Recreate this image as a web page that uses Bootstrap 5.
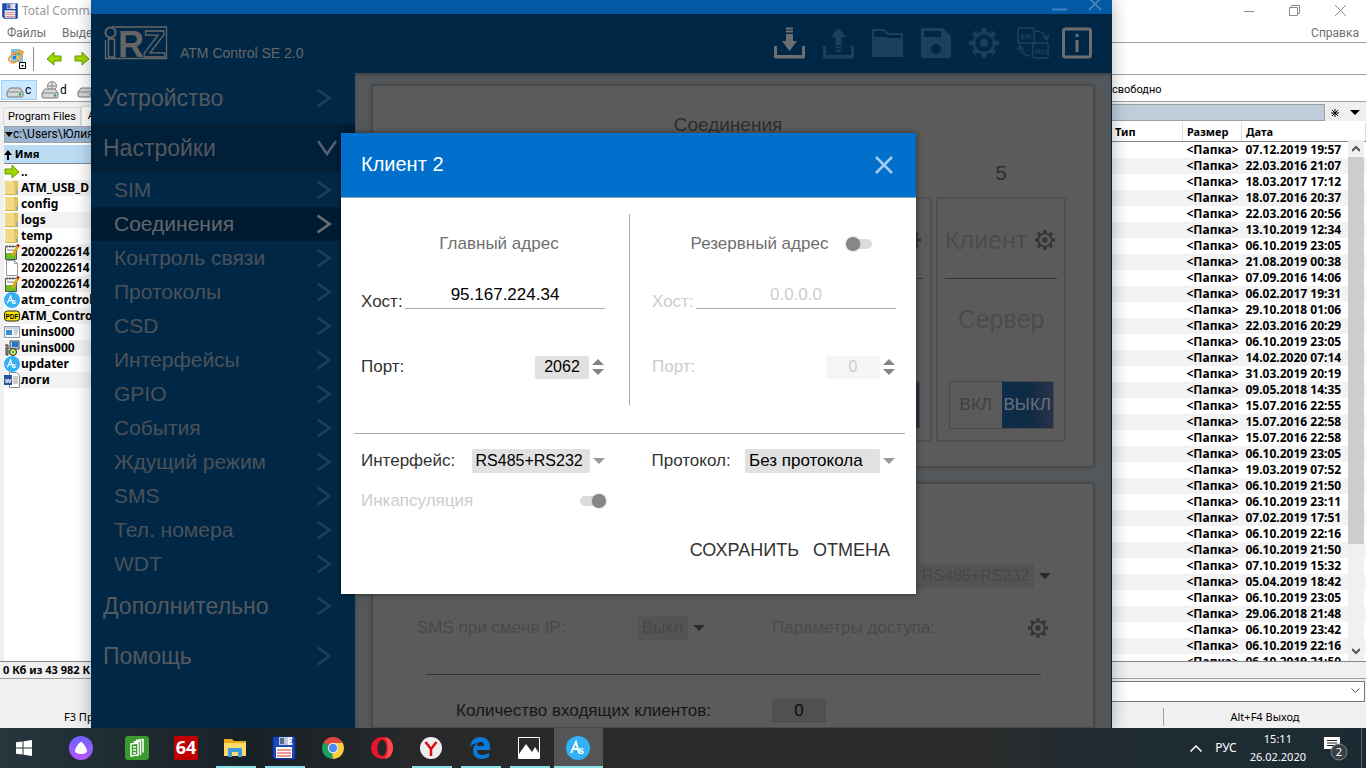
<!DOCTYPE html>
<html lang="ru">
<head>
<meta charset="utf-8">
<meta name="viewport" content="width=device-width, initial-scale=1">
<title>ATM Control SE 2.0</title>
<link href="https://cdn.jsdelivr.net/npm/bootstrap@5.3.0/dist/css/bootstrap.min.css" rel="stylesheet">
<style>
  body { font-family: "Liberation Sans", Arial, sans-serif; font-size: 17px; line-height: 24px; }
  svg { display: block; flex: none; }
  button, input, select { font-family: inherit; }
  a { text-decoration: none; color: inherit; }
  .plain-btn { border: 0; background: none; padding: 0; color: inherit; }

  /* file manager behind */
  .tc { font-family: "Noto Sans", sans-serif; font-size: 11px; line-height: 16px; color: #000; background: #fff; }
  .tc-title { height: 22px; padding-left: 2px; color: #999; font-size: 12px; }
  .tc-wbtns { gap: 35px; padding-right: 20px; color: #8b8b8b; }
  .tc-menu { height: 22px; padding: 2px 7px 0; font-family: Roboto, sans-serif; font-size: 12px; color: #6f6f6f; border-bottom: 1px solid #a0a0a0; }
  .tc-tools { height: 32px; border-bottom: 1px solid #a0a0a0; padding-left: 7px; gap: 12px; }
  .tc-tools .sep { width: 1px; height: 24px; background: #8d8d8d; margin-left: -6px; }
  .tc-drives { height: 28px; border-bottom: 1px solid #a0a0a0; padding: 4px 0 0 1px; font-family: Roboto, sans-serif; font-size: 12px; }
  .drive { height: 20px; width: 36px; padding: 0 4px; gap: 1px; }
  .drive.on { background: #cce8ff; border: 1px solid #99d1ff; }
  .tc-panes { background: #f0f0f0; }
  .pane { flex: 1 1 0; }
  .tabs { height: 20px; font-family: Roboto, sans-serif; }
  .tabs span { border: 1px solid #d9d9d9; border-bottom: 0; height: 18px; padding: 0 4px; background: #f0f0f0; margin-left: 3px; margin-top: 1px; line-height: 18px; }
  .tabs span.on { background: #fff; height: 20px; margin: 0; padding: 0 6px; }
  .pathbar { height: 17px; border: 1px solid #a0a0a0; font-family: Roboto, sans-serif; font-size: 12px; line-height: 15px; background: #99b4d1; }
  .pathbar.far { background: #bfcddb; }
  .files { width: 100%; table-layout: fixed; border-collapse: collapse; font-weight: 700; font-size: 12px; }
  .files td, .files th { height: 16px; padding: 0; line-height: 16px; white-space: nowrap; }
  .files tbody tr:nth-child(even) { background: #f3f3f3; }
  .files thead th { height: 18px; border-bottom: 1px solid #828790; font-size: 11px; background: #fff; }
  .files.near thead th { background: #bcdcf4; }
  .files .fname { display: flex; align-items: center; gap: 1px; height: 16px; }
  .files.far th { padding-left: 4px; border-right: 1px solid #ddd; }
  .files.far td { padding-left: 4px; }
  .far-scroll { position: absolute; right: 2px; top: 38px; bottom: 0; width: 16px; background: #f0f0f0; color: #555; }
  .far-scroll .thumb { background: #cdcdcd; height: 387px; }
  .tc-status { height: 18px; border-top: 1px solid #828790; border-bottom: 1px solid #a0a0a0; background: #f0f0f0; font-size: 11px; padding-left: 3px; font-weight: 700; }
  .tc-cmd { height: 24px; background: #f0f0f0; padding-top: 2px; }
  .tc-cmd .box { height: 21px; border: 1px solid #7a7a7a; background: #fff; margin: 0 1px 0 120px; padding-right: 4px; }
  .tc-keys { height: 26px; background: #f0f0f0; padding-top: 3px; }

  /* application window */
  .app { position: absolute; left: 91px; right: 254px; top: 0; bottom: 0; background: #002846; box-shadow: 0 0 16px rgba(0,0,0,.3); overflow: hidden; }
  .app-top { height: 14px; background: #0359a3; color: #3f83bd; padding-right: 10px; gap: 21px; }
  .app-head { height: 59px; padding: 0 20px 2px 13px; color: #666; gap: 12px; }
  .app-head .name { font-size: 14px; line-height: 20px; padding-top: 21px; }
  .app-tools { gap: 18px; color: #1c3f5c; }
  .app-tools .lit { color: #6d6e70; }
  .side { width: 264px; color: #55585d; }
  .side a { display: flex; align-items: center; justify-content: space-between; height: 50px; padding: 0 23px 0 12px; font-size: 23px; }
  .side a.sub { height: 34px; padding-left: 23px; font-size: 21px; color: #4b5158; }
  .side svg { color: #1d3e5a; }
  .side a.open { background: #001f39; }
  .side a.open svg { color: #51606e; margin-right: -5px; }
  .side a.cur { background: #001b31; color: #63676b; }
  .side a.cur svg { color: #6b6f73; }
  .work { background: #54585a; padding: 12px 17px 0 17px; gap: 16px; box-shadow: inset 0 2px 3px rgba(0,0,0,.25); border-right: 1px solid #002846; }
  .panel { background: #5b5b5b; border: 1px solid #494949; color: #2d2d2d; box-shadow: 0 0 3px rgba(0,0,0,.4); }
  .panel-links { height: 382px; flex: none; padding: 27px 27px 0; }
  .panel-links h2 { font-size: 19px; line-height: 24px; margin: 0; padding-right: 10px; }
  .slots { gap: 4px; margin-top: 24px; }
  .slot-no { height: 36px; font-size: 20px; text-align: center; line-height: 24px; }
  .slot { height: 245px; border: 2px solid #505050; border-radius: 3px; padding: 27px 7px 0; color: #4b4b4b; font-size: 25px; }
  .slot .line { height: 1px; background: #353535; margin: 24px 0; }
  .slot .top { height: 28px; padding-right: 2px; color: #4c4c4c; }
  .slot .top svg { color: #343434; }
  .slot .srv { height: 36px; line-height: 32px; }
  .onoff { height: 48px; margin: 42px 3px 0 4px; border: 1px solid #484848; border-radius: 2px; font-size: 17px; }
  .onoff button { flex: 1 1 0; color: #414141; }
  .onoff button + button { background: linear-gradient(90deg, #0e2d49, #0f2b45 50%, #29324a); color: #69727c; }
  .panel-in { flex: 1 1 auto; padding: 80px 41px 0 44px; color: #494949; }
  .panel-in .caret { color: #2a2a2a; }
  .dim-select { appearance: none; border: 0; background: #545454; color: #474747; height: 24px; padding: 0 4px; opacity: 1; }
  .dim-num { border: 0; background: #505050; color: #0b0b0b; width: 54px; height: 24px; text-align: center; }
  .panel-in hr { border-color: #333; opacity: 1; margin: 34px 11px 24px 9px; }
  .param { flex: 0 0 355px; }

  /* dialog */
  .dlg { position: absolute; left: 250px; right: 196px; top: 133px; background: #fff; color: #333; box-shadow: 0 0 6px rgba(0,0,0,.5); }
  .dlg-head { height: 65px; padding: 0 22px 0 20px; background: #0070cc; color: #fff; border-bottom: 1px solid #8aa5bd; }
  .dlg-head h1 { font-size: 20px; line-height: 24px; margin: 0 0 2px; font-weight: 400; }
  .dlg-head button { color: #a3cbee; }
  .dlg-body { padding: 16px 20px 32px; }
  .half { flex: 1 1 0; min-width: 0; }
  .half:first-child { padding-right: 24px; }
  .half + .half { padding-left: 22px; }
  .addr { height: 191px; padding-top: 18px; }
  .addr + .addr { border-left: 1px solid #aaa; }
  .addr-title { gap: 18px; color: #6f6f6f; }
  .addr:first-child .addr-title { padding-left: 32px; }
  .addr + .addr .addr-title { padding-left: 15px; }
  .host { height: 33px; margin: 25px 0 41px; }
  .host input { width: 200px; height: 28px; border: 0; border-bottom: 1px solid #aaa; text-align: center; padding: 0; color: #000; background: none; }
  .num { width: 54px; height: 23px; border: 0; background: #e1e1e1; color: #000; text-align: center; padding: 0; border-radius: 2px; font-size: 16px; }
  .spin { gap: 2px; }
  .faded, .faded input { color: #ccc !important; }
  .faded .num { background: #f5f5f5; }
  .rule { height: 1px; background: #aaa; margin: 28px -9px 15px -7px; }
  .pick { appearance: none; border: 0; border-radius: 2px; height: 24px; background: #e1e1e1; color: #000; padding: 0 4px; }
  .pick.fine, .dim-select.fine { font-size: 16px; }
  .tog { appearance: none; position: relative; width: 26px; height: 10px; border-radius: 5px; background: #dcdcdc; margin: 0; }
  .tog::before { content: ""; position: absolute; left: 0; top: -2px; width: 14px; height: 14px; border-radius: 50%; background: #868886; box-shadow: 0 0 2px rgba(0,0,0,.35); }
  .tog:checked::before { left: 12px; }
  .dlg-actions { gap: 14px; margin-top: 25px; padding-right: 6px; font-size: 18px; }

  /* taskbar */
  .taskbar { height: 40px; flex: none; background: linear-gradient(90deg, #26363c, #182127 18%, #262829 30%, #2b2b2b 50%, #2a2b2b 72%, #202b32 80%, #1c2b33); color: #fff; }
  .taskbar .task { width: 49px; height: 40px; display: flex; align-items: center; justify-content: center; padding-right: 1px; }
  .taskbar .run { background: linear-gradient(#8ae1e8, #8ae1e8) center bottom / 40px 2px no-repeat; }
  .taskbar .now { background: linear-gradient(#8ae1e8, #8ae1e8) center bottom / 100% 2px no-repeat #545656; }
  .tray { font-family: "Noto Sans", sans-serif; font-size: 12px; line-height: 18px; gap: 13px; }
  .tray .clock { font-size: 11px; }
  .tray .edge { width: 1px; height: 40px; background: #59646a; margin-right: 4px; }
</style>
</head>
<body class="d-flex flex-column vh-100 overflow-hidden">

<svg width="0" height="0" class="position-absolute" aria-hidden="true">
  <symbol id="gear" viewBox="0 0 30 30"><g fill="none" stroke="currentColor"><circle cx="15" cy="15" r="10" stroke-width="2.500"/><g stroke-width="4.500"><path d="M15 0v4.500M15 25.500V30M0 15h4.500M25.500 15H30M4.400 4.400l3 3M22.600 22.600l3 3M4.400 25.600l3-3M22.600 7.400l3-3"/></g></g><circle cx="15" cy="15" r="4" fill="currentColor"/></symbol>
  <symbol id="chev" viewBox="0 0 16 20"><path d="M1.500 1.500 13.500 10 1.500 18.500" fill="none" stroke="currentColor" stroke-width="2.600"/></symbol>
  <symbol id="caret" viewBox="0 0 14 8"><path d="M1 1h12L7 7z" fill="currentColor"/></symbol>
  <symbol id="spin" viewBox="0 0 14 20"><path d="M1 8h12L7 2zM1 12h12L7 18z" fill="#858585"/></symbol>
  <symbol id="fold" viewBox="0 0 16 16"><path d="M1 1h12l1 1v13H1z" fill="#d9b64d"/><path d="M1 1h9l1 13H1z" fill="#f3da86"/><path d="M11 2h2v10l-2 2z" fill="#e6c862"/><path d="M12.500 10h1v4h-1z" fill="#54a8d8"/></symbol>
  <symbol id="arrow" viewBox="0 0 16 16"><path d="M1 5h7V1l7 7-7 6v-4H1z" fill="#a2d600" stroke="#5f9a00"/></symbol>
  <symbol id="note" viewBox="0 0 16 16"><path d="M1.500 2.500h11v13h-11z" fill="#fff" stroke="#555"/><path d="M2 9h10v6H2z" fill="#68bd26"/><path d="M3 6h7M3 1v3M6 1v3M9 1v3" stroke="#777"/><path d="m8 12 6-10" stroke="#e9a211" stroke-width="2.500"/><path d="m13.500 2.500 1.200-2" stroke="#9d1515" stroke-width="2.500"/></symbol>
  <symbol id="atm" viewBox="0 0 24 24"><circle cx="12" cy="12" r="12" fill="#32b1f5"/><path d="m5 17 5-11 3 11M7 13h5" fill="none" stroke="#fff" stroke-width="1.800"/><text x="12" y="18" font-size="11" font-weight="700" fill="#fff" font-family="Liberation Sans">s</text></symbol>
  <symbol id="floppy" viewBox="0 0 24 24"><path d="M1 1h22v22H3l-2-2z" fill="#1848c0"/><path d="M1 1h22v22H3l-2-2z" fill="none" stroke="#0b2f91"/><path d="M7 1h13v8H7z" fill="#b9c5dc"/><path d="M8 2h4v6H8z" fill="#5c6b8c"/><path d="M4 11h16v11H4z" fill="#fff"/><path d="M5 14h14M5 17h14M5 20h14" stroke="#e77676" stroke-width="1.500"/><path d="M20.500 2h-4v6h4M16.500 5h3" fill="none" stroke="#fff" stroke-width="1.500"/></symbol>
  <symbol id="disk" viewBox="0 0 18 12"><path d="m1 6 3-4h10l3 4v4q0 1-2 1H3q-2 0-2-1z" fill="#d4d6d8" stroke="#777"/><path d="M1 6h16" stroke="#888"/><circle cx="14" cy="8.500" r="1.200" fill="#35a435"/></symbol>
</svg>

<main class="position-relative flex-grow-1 overflow-hidden" style="min-height:0">

  <section class="tc d-flex flex-column h-100">
    <div class="tc-title d-flex align-items-center justify-content-between">
      <div class="d-flex align-items-center gap-1"><svg width="16" height="16"><use href="#floppy"/></svg><span>Total Comma</span></div>
      <div class="tc-wbtns d-flex align-items-center">
        <button class="plain-btn" aria-label="Свернуть"><svg width="10" height="10" stroke="currentColor"><path d="M0 5.500h10"/></svg></button>
        <button class="plain-btn" aria-label="Развернуть"><svg width="11" height="11" fill="none" stroke="currentColor"><path d="M.5 2.500h8v8h-8zM2.500 2.500v-2h8v8h-2"/></svg></button>
        <button class="plain-btn" aria-label="Закрыть"><svg width="11" height="11" stroke="currentColor"><path d="m0 0 11 11M11 0 0 11"/></svg></button>
      </div>
    </div>
    <nav class="tc-menu d-flex align-items-center justify-content-between">
      <div class="d-flex gap-3"><a href="#">Файлы</a><a href="#">Выдел</a></div><a href="#">Справка</a>
    </nav>
    <div class="tc-tools d-flex align-items-center">
      <svg width="20" height="22" viewBox="0 0 20 22"><path d="M4 1h9l3 4v9H4z" fill="#79c5ec"/><path d="M6 4h3v3H6z" fill="#e55024"/><path d="M10 4h3v3h-3z" fill="#7fb91d"/><path d="M6 8h3v3H6z" fill="#1785cf"/><path d="M10 8h3v3h-3z" fill="#f5c52b"/><path d="M3 13c-5-3 9-12 13-9-3 9-10 13-13 9" fill="none" stroke="#f2a145" stroke-width="2"/><path d="M12.500 14.500h6v6h-6z" fill="#fff" stroke="#000"/><path d="M14 17h3l-1.500 2z"/></svg>
      <span class="sep"></span>
      <svg width="16" height="16"><use href="#arrow" transform="matrix(-1 0 0 1 16 0)"/></svg>
      <svg width="16" height="16"><use href="#arrow"/></svg>
    </div>
    <div class="tc-drives d-flex align-items-center justify-content-between">
      <div class="d-flex">
        <button class="plain-btn drive on d-flex align-items-center"><svg width="18" height="12" class="mt-1"><use href="#disk"/></svg>c</button>
        <button class="plain-btn drive d-flex align-items-center"><svg width="18" height="18" viewBox="0 0 18 18"><circle cx="11" cy="5" r="4.500" fill="#e4e4e4" stroke="#888"/><path d="M7 5h8M11 1v8" stroke="#888"/><use href="#disk" width="18" height="12" y="6"/></svg>d</button>
        <button class="plain-btn drive d-flex align-items-center" aria-label="Диск"><svg width="18" height="12" class="mt-1"><use href="#disk"/></svg></button>
      </div>
      <span style="width:254px;font-size:11px">свободно</span>
    </div>
    <div class="tc-panes d-flex flex-grow-1 overflow-hidden" style="min-height:0">
      <div class="pane d-flex flex-column pt-1">
        <div class="tabs d-flex"><span>Program Files</span><span class="on">A</span></div>
        <div class="pathbar d-flex align-items-center ms-1"><svg width="8" height="5"><path d="M0 0h8L4 5z"/></svg>c:\Users\Юлия\</div>
        <div class="bg-white flex-grow-1 ms-1" style="padding-top:2px">
        <table class="files near"><thead><tr><th><svg width="8" height="10" class="d-inline-block" viewBox="0 0 8 10"><path d="M4 0 0 5h3v5h2V5h3z"/></svg> Имя</th></tr></thead>
          <tbody>
            <tr><td><div class="fname"><svg width="16" height="16"><use href="#arrow"/></svg>..</div></td></tr>
            <tr><td><div class="fname"><svg width="16" height="16"><use href="#fold"/></svg>ATM_USB_D</div></td></tr>
            <tr><td><div class="fname"><svg width="16" height="16"><use href="#fold"/></svg>config</div></td></tr>
            <tr><td><div class="fname"><svg width="16" height="16"><use href="#fold"/></svg>logs</div></td></tr>
            <tr><td><div class="fname"><svg width="16" height="16"><use href="#fold"/></svg>temp</div></td></tr>
            <tr><td><div class="fname"><svg width="16" height="16"><use href="#note"/></svg>2020022614</div></td></tr>
            <tr><td><div class="fname"><svg width="16" height="16"><path d="M2.500.5h8l3 3v12h-11zM10.500.5v3h3" fill="#fff" stroke="#999"/></svg>2020022614</div></td></tr>
            <tr><td><div class="fname"><svg width="16" height="16"><use href="#note"/></svg>2020022614</div></td></tr>
            <tr><td><div class="fname"><svg width="16" height="16"><use href="#atm"/></svg>atm_control</div></td></tr>
            <tr><td><div class="fname"><svg width="16" height="16"><rect x=".5" y="3" width="15" height="10" rx="3" fill="#ffe800" stroke="#222"/><text x="1.500" y="10.500" font-size="6.500" font-weight="700" font-family="Liberation Sans">PDF</text></svg>ATM_Contro</div></td></tr>
            <tr><td><div class="fname"><svg width="16" height="16"><path d="M.5 2.500h15v11H.5z" fill="#f6f6f6" stroke="#8b99a8"/><path d="M2 6h6v5H2z" fill="#3f8dd0"/><path d="M10 6h4M10 8h4M10 10h3M1 4h14" stroke="#9bb0c5"/></svg>unins000</div></td></tr>
            <tr><td><div class="fname"><svg width="16" height="16"><path d="M6 1h9v8H6z" fill="#c3c7cc" stroke="#444"/><path d="M8 2h6v5H8z" fill="#1b76d8"/><path d="M1 5h3v10H2V7" fill="#aaa" stroke="#333"/><circle cx="9" cy="12" r="3.500" fill="#d8ea50" stroke="#222"/><circle cx="9" cy="12" r="1.200" fill="#0bb"/></svg>unins000</div></td></tr>
            <tr><td><div class="fname"><svg width="16" height="16"><use href="#atm"/></svg>updater</div></td></tr>
            <tr><td><div class="fname"><svg width="16" height="16"><path d="M5.500.5h7l3 3v12h-10z" fill="#fff" stroke="#888"/><path d="M9 5h5M9 7h5M9 9h5M9 11h5" stroke="#999"/><path d="M0 3h8v10H0z" fill="#2a5699"/><text x="1" y="10.500" font-size="8" font-weight="700" fill="#fff" font-family="Liberation Sans">w</text></svg>логи</div></td></tr>
          </tbody></table>
        </div>
      </div>
      <div class="pane position-relative overflow-hidden" style="padding-top:2px">
        <div class="d-flex align-items-center"><div class="pathbar far flex-grow-1"></div>
          <div class="d-flex align-items-center justify-content-around" style="width:41px"><svg width="8" height="8" stroke="#000"><path d="M4 0v8M0 4h8M1 1l6 6M7 1 1 7"/></svg><svg width="10" height="5"><path d="M0 0h10L5 5z"/></svg></div></div>
        <div class="bg-white" style="padding-top:2px">
        <table class="files far"><colgroup><col><col style="width:72px"><col style="width:59px"><col style="width:124px"></colgroup>
          <thead><tr><th></th><th>Тип</th><th>Размер</th><th>Дата</th></tr></thead><tbody id="dates"></tbody></table>
        </div>
        <div class="far-scroll d-flex flex-column align-items-center"><svg width="8" height="17" fill="none" stroke="currentColor" stroke-width="2"><path d="m0 11 4-4 4 4"/></svg><div class="thumb w-100"></div>
          <svg width="8" height="18" class="mt-auto" fill="none" stroke="currentColor" stroke-width="2"><path d="m0 6 4 4 4-4"/></svg></div>
      </div>
    </div>
    <div class="tc-status">0 Кб из 43 982 К</div>
    <div class="tc-cmd"><div class="box d-flex align-items-center justify-content-end"><svg width="9" height="6" fill="none" stroke="#555"><path d="m.5.5 4 4 4-4"/></svg></div></div>
    <div class="tc-keys d-flex align-items-center justify-content-between">
      <button class="plain-btn" style="padding-left:64px">F3 Пр</button>
      <div class="d-flex align-items-center" style="width:203px"><span style="width:1px;height:18px;background:#a0a0a0"></span><button class="plain-btn flex-grow-1">Alt+F4 Выход</button></div>
    </div>
  </section>

  <section class="app d-flex flex-column">
    <div class="app-top d-flex flex-none justify-content-end">
      <button class="plain-btn" aria-label="Свернуть"><svg width="15" height="14" stroke="currentColor" stroke-width="2"><path d="M0 9.500h15"/></svg></button>
      <button class="plain-btn" aria-label="Закрыть"><svg width="14" height="14" stroke="currentColor" stroke-width="2"><path d="m1-2 12 12M13-2 1 10"/></svg></button>
    </div>
    <header class="app-head d-flex align-items-center">
      <svg width="64" height="34" viewBox="0 0 64 34" fill="none" stroke="currentColor" font-family="Liberation Sans" font-weight="700"><path d="M8 1h54.500v31.500H1.500V14" stroke-width="1.300"/><circle cx="6.500" cy="6.500" r="5" stroke-width="2"/><rect x="4.500" y="13" width="6" height="18" stroke-width="1.500"/><text x="14" y="31" font-size="36" fill="currentColor" stroke="none">R</text><text x="39" y="31" font-size="37" stroke-width="1.300">Z</text></svg>
      <span class="name">ATM Control SE 2.0</span>
      <div class="app-tools d-flex align-items-center ms-auto">
        <button class="plain-btn lit" aria-label="Прочитать"><svg width="31" height="32" viewBox="0 0 31 32" fill="currentColor"><path d="M0 19h3v9h25v-9h3v11q0 1.500-1.500 1.500h-28Q0 31.500 0 30zM12 7h7v7h4l-7.500 10L8 14h4zM12 3.500h7v2h-7zM12 .5h7v2h-7z"/></svg></button>
        <button class="plain-btn" aria-label="Записать"><svg width="31" height="32" viewBox="0 0 31 32" fill="currentColor"><path d="M0 19h3v9h25v-9h3v11q0 1.500-1.500 1.500h-28Q0 31.500 0 30zM12.500 18h6v-8H23L15.500 1 8 10h4.500zM12.500 19.500h6v2h-6zM12.500 23h6v2h-6z"/></svg></button>
        <button class="plain-btn" aria-label="Открыть"><svg width="31" height="30" viewBox="0 0 31 30" fill="currentColor"><path fill-rule="evenodd" d="M0 2q0-1 1-1h12l3 4h14q1 0 1 1v23H0zM2 3v6h12l2 1h13V7H15l-3-4z"/></svg></button>
        <button class="plain-btn" aria-label="Сохранить файл"><svg width="30" height="32" viewBox="0 0 30 32" fill="currentColor"><path fill-rule="evenodd" d="M0 1h22l8 8v22H0zM3 4v6h17V4zM15 17a5 5 0 1 0 .01 0z"/></svg></button>
        <button class="plain-btn" aria-label="Настройки"><svg width="30" height="30"><use href="#gear"/></svg></button>
        <button class="plain-btn" aria-label="Язык"><svg width="32" height="32" viewBox="0 0 32 32" fill="none" stroke="currentColor" stroke-width="1.500"><rect x="1" y="1" width="16" height="15" rx="1"/><rect x="16" y="16" width="15" height="15" rx="1"/><path d="M18 4q10 0 12 9M26 10l4 3 2-5M14 29Q4 29 3 19M0 23l3-4 4 4"/><g font-family="Liberation Sans" font-weight="700" font-size="8" fill="currentColor" stroke="none"><text x="3.500" y="11.500">EN</text><text x="18" y="26.500">RU</text></g></svg></button>
        <button class="plain-btn lit" aria-label="О программе" style="margin-left:-5px"><svg width="30" height="32" viewBox="0 0 30 32" fill="none" stroke="currentColor" stroke-width="3"><rect x="1.500" y="2" width="27" height="28" rx="2"/><path d="M15 7v3M15 13v12"/></svg></button>
      </div>
    </header>
    <div class="d-flex flex-grow-1" style="min-height:0">
      <nav class="side flex-shrink-0">
        <a href="#">Устройство<svg width="16" height="20"><use href="#chev"/></svg></a>
        <a href="#" class="open">Настройки<svg width="20" height="16" viewBox="0 0 20 16"><path d="m1 1 9 13 9-13" fill="none" stroke="currentColor" stroke-width="2.600"/></svg></a>
        <a href="#" class="sub">SIM<svg width="16" height="20"><use href="#chev"/></svg></a>
        <a href="#" class="sub cur">Соединения<svg width="16" height="20"><use href="#chev"/></svg></a>
        <a href="#" class="sub">Контроль связи<svg width="16" height="20"><use href="#chev"/></svg></a>
        <a href="#" class="sub">Протоколы<svg width="16" height="20"><use href="#chev"/></svg></a>
        <a href="#" class="sub">CSD<svg width="16" height="20"><use href="#chev"/></svg></a>
        <a href="#" class="sub">Интерфейсы<svg width="16" height="20"><use href="#chev"/></svg></a>
        <a href="#" class="sub">GPIO<svg width="16" height="20"><use href="#chev"/></svg></a>
        <a href="#" class="sub">События<svg width="16" height="20"><use href="#chev"/></svg></a>
        <a href="#" class="sub">Ждущий режим<svg width="16" height="20"><use href="#chev"/></svg></a>
        <a href="#" class="sub">SMS<svg width="16" height="20"><use href="#chev"/></svg></a>
        <a href="#" class="sub">Тел. номера<svg width="16" height="20"><use href="#chev"/></svg></a>
        <a href="#" class="sub">WDT<svg width="16" height="20"><use href="#chev"/></svg></a>
        <a href="#">Дополнительно<svg width="16" height="20"><use href="#chev"/></svg></a>
        <a href="#">Помощь<svg width="16" height="20"><use href="#chev"/></svg></a>
      </nav>
      <div class="work d-flex flex-column flex-grow-1 overflow-hidden">
        <section class="panel panel-links">
          <h2 class="text-center fw-normal">Соединения</h2>
          <div class="slots d-flex">
            <div class="half p-0"><div class="slot-no"></div><div class="slot"></div></div>
            <div class="half p-0"><div class="slot-no"></div><div class="slot"></div></div>
            <div class="half p-0"><div class="slot-no"></div><div class="slot"></div></div>
            <div class="half p-0"><div class="slot-no"></div><div class="slot"><div class="top d-flex align-items-center justify-content-end"><svg width="20" height="20"><use href="#gear"/></svg></div><div class="line"></div><div class="srv"></div><div class="onoff d-flex"><button class="plain-btn" aria-label="Вкл"></button><button class="plain-btn" aria-label="Выкл"></button></div></div></div>
            <div class="half p-0"><div class="slot-no">5</div><div class="slot"><div class="top d-flex align-items-center justify-content-between">Клиент<svg width="20" height="20"><use href="#gear"/></svg></div><div class="line"></div><div class="srv text-center">Сервер</div><div class="onoff d-flex"><button class="plain-btn">ВКЛ</button><button class="plain-btn">ВЫКЛ</button></div></div></div>
          </div>
        </section>
        <section class="panel panel-in">
          <div class="d-flex align-items-center justify-content-end gap-1"><select class="dim-select fine" aria-label="Интерфейс" disabled><option>RS485+RS232</option></select><svg width="14" height="8" class="caret"><use href="#caret"/></svg></div>
          <div class="d-flex align-items-center mt-4 pt-1">
            <div class="param d-flex align-items-center"><label for="sms">SMS при смене IP:</label><select id="sms" class="dim-select ms-auto" disabled><option>Выкл</option></select><svg width="14" height="8" style="margin-right:66px" class="ms-1 caret"><use href="#caret"/></svg></div>
            <span>Параметры доступа:</span><button class="plain-btn ms-auto me-1" style="color:#333" aria-label="Параметры"><svg width="20" height="20"><use href="#gear"/></svg></button>
          </div>
          <hr>
          <div class="d-flex align-items-center" style="color:#161616"><label for="cnt" class="param" style="padding-left:39px">Количество входящих клиентов:</label><input id="cnt" class="dim-num" value="0"></div>
        </section>
      </div>
    </div>
  </section>

  <div class="app bg-transparent shadow-none pe-none">
  <form class="dlg pe-auto" role="dialog" aria-labelledby="dt">
    <div class="dlg-head d-flex align-items-center justify-content-between"><h1 id="dt">Клиент 2</h1>
      <button type="button" class="plain-btn" aria-label="Закрыть"><svg width="20" height="20" stroke="currentColor" stroke-width="2.500"><path d="m2 2 16 16M18 2 2 18"/></svg></button></div>
    <div class="dlg-body">
      <div class="d-flex">
        <div class="half addr">
          <div class="addr-title d-flex justify-content-center">Главный адрес</div>
          <div class="host d-flex justify-content-between"><label class="align-self-end" for="h1">Хост:</label><input id="h1" value="95.167.224.34"></div>
          <div class="d-flex align-items-center spin"><label class="me-auto" for="p1">Порт:</label><input id="p1" class="num" value="2062"><svg width="14" height="20"><use href="#spin"/></svg></div>
        </div>
        <div class="half addr">
          <div class="addr-title d-flex justify-content-center align-items-center"><label for="rs">Резервный адрес</label><input id="rs" class="tog" type="checkbox"></div>
          <div class="host faded d-flex justify-content-between"><label class="align-self-end" for="h2">Хост:</label><input id="h2" value="0.0.0.0" disabled></div>
          <div class="d-flex align-items-center spin faded"><label class="me-auto" for="p2">Порт:</label><input id="p2" class="num" value="0" disabled><svg width="14" height="20"><use href="#spin"/></svg></div>
        </div>
      </div>
      <div class="rule"></div>
      <div class="d-flex">
        <div class="half d-flex align-items-center spin"><label class="me-auto" for="if">Интерфейс:</label><select id="if" class="pick fine" style="width:118px"><option>RS485+RS232</option></select><svg width="14" height="8" color="#999"><use href="#caret"/></svg></div>
        <div class="half d-flex align-items-center spin"><label class="me-auto" for="pr">Протокол:</label><select id="pr" class="pick" style="width:135px"><option>Без протокола</option></select><svg width="14" height="8" color="#999"><use href="#caret"/></svg></div>
      </div>
      <div class="d-flex mt-3">
        <div class="half d-flex align-items-center justify-content-between faded"><label for="en">Инкапсуляция</label><input id="en" class="tog" type="checkbox" checked disabled></div>
        <div class="half"></div>
      </div>
      <div class="dlg-actions d-flex justify-content-end"><button type="button" class="plain-btn">СОХРАНИТЬ</button><button type="button" class="plain-btn">ОТМЕНА</button></div>
    </div>
  </form>
  </div>
</main>

<footer class="taskbar d-flex justify-content-between">
  <div class="d-flex">
    <button class="plain-btn task" aria-label="Пуск"><svg width="16" height="16" fill="#fff"><path d="M0 2.300 6.500 1.400v6.100H0zM7.500 1.200 16 0v7.500H7.500zM0 8.500h6.500v6.100L0 13.700zM7.500 8.500H16V16l-8.500-1.200z"/></svg></button>
    <button class="plain-btn task" aria-label="Алиса" style="width:64px"><svg width="24" height="24"><defs><linearGradient id="al" x2="1" y2="1" x1="1" y1="0"><stop stop-color="#6a62ff"/><stop offset="1" stop-color="#b657ff"/></linearGradient></defs><circle cx="12" cy="12" r="12" fill="url(#al)"/><path d="M12 6c2 0 6 7 6 9s-3 3-6 3-6-1-6-3 4-9 6-9" fill="#fff"/></svg></button>
    <button class="plain-btn task" aria-label="Документы"><svg width="24" height="24" fill="none" stroke="#fff" stroke-width="1.500"><rect width="24" height="24" rx="3" fill="#3c9a2e" stroke="none"/><path d="M11 4.500l7-1v13M8.500 6l7-1v14M6 8l7-1v12l-7 1zM8 11h3M8 14h3M8 17h3"/></svg></button>
    <button class="plain-btn task" aria-label="AIDA64"><svg width="24" height="24"><path d="M0 0h24v24H0z" fill="#c00000"/><text x="12" y="18" text-anchor="middle" font-size="18" font-weight="700" fill="#fff" font-family="Open Sans">64</text></svg></button>
    <button class="plain-btn task run" aria-label="Проводник"><svg width="22" height="20"><path d="M0 1h8l2 2h12v15H0z" fill="#e8a917"/><path d="M0 5h22v13H0z" fill="#ffd969"/><path d="M4 19v-8q0-1 1-1h12q1 0 1 1v8h-4v-5H8v5z" fill="#3e9be0"/></svg></button>
    <button class="plain-btn task run" aria-label="Total Commander"><svg width="24" height="24"><use href="#floppy"/></svg></button>
    <button class="plain-btn task" aria-label="Chrome"><svg width="22" height="22" viewBox="0 0 22 22"><path d="M11 11 1.500 5.500A11 11 0 0 1 20.500 5.500z" fill="#e04a3f"/><path d="M11 11 20.500 5.500A11 11 0 0 1 11 22z" fill="#fccd3c"/><path d="M11 11v11A11 11 0 0 1 1.500 5.500z" fill="#1ba15f"/><path d="M11 6h9.800L15 13zM11 22l4-8h-5z" fill="#fccd3c"/><path d="M11 6h9.800L20 4.600H10z" fill="#e04a3f"/><circle cx="11" cy="11" r="5.200" fill="#f1f1f1"/><circle cx="11" cy="11" r="4.200" fill="#4a8af4"/></svg></button>
    <button class="plain-btn task" aria-label="Opera"><svg width="22" height="22"><path fill-rule="evenodd" d="M11 0a11 11 0 1 0 .01 0zM11 3c6 0 6 16 0 16S5 3 11 3z" fill="#e5152a"/><path d="M13 0q9 1 9 11t-9 11c5-3 5-19 0-22" fill="#ff4a50"/></svg></button>
    <button class="plain-btn task run" aria-label="Яндекс"><svg width="22" height="22"><circle cx="11" cy="11" r="11" fill="#eee"/><path d="m5.500 5 5.500 7 5.500-7M11 12v7" fill="none" stroke="#d9090f" stroke-width="2.500"/></svg></button>
    <button class="plain-btn task run" aria-label="Edge"><svg width="20" height="22" viewBox="0 0 20 22"><path d="M0 10C1 3 5 0 11 0q9 1 9 10v3H7c0 6 7 6 12 3v4c-7 4-16 2-16-6 0-4 2-7 5-8Q3 6 0 10M7 9h7c0-6-7-5-7 0" fill="#0a7ad8"/></svg></button>
    <button class="plain-btn task run" aria-label="Фотографии"><svg width="22" height="22"><path d="M.5.5h21v21H.5z" fill="none" stroke="#fff"/><path d="m1 17 7-10 6 8 3-5 4 6v5H1z" fill="#fff"/></svg></button>
    <button class="plain-btn task now" aria-label="ATM Control"><svg width="24" height="24"><use href="#atm"/></svg></button>
  </div>
  <div class="tray d-flex align-items-center">
    <svg width="12" height="7" fill="none" stroke="#fff" stroke-width="1.500"><path d="m.5 6.500 5.500-5.500 5.500 5.500"/></svg>
    <span>РУС</span>
    <div class="clock text-center">15:11<br>26.02.2020</div>
    <svg width="25" height="28" class="ms-1"><path d="M1 3h16v12h-4v4l-4-4H1z" fill="#fff"/><path d="M4 6.500h10M4 9h10M4 11.500h7" stroke="#222"/><circle cx="16" cy="18" r="8" fill="#394147" stroke="#7c8488"/><text x="16" y="22" text-anchor="middle" font-size="11" fill="#fff">2</text></svg>
    <span class="edge"></span>
  </div>
</footer>

<script>
  const dates = ["07.12.2019 19:57","22.03.2016 21:07","18.03.2017 17:12","18.07.2016 20:37","22.03.2016 20:56","13.10.2019 12:34","06.10.2019 23:05","21.08.2019 00:38","07.09.2016 14:06","06.02.2017 19:31","29.10.2018 01:06","22.03.2016 20:29","06.10.2019 23:05","14.02.2020 07:14","31.03.2019 20:19","09.05.2018 14:35","15.07.2016 22:55","15.07.2016 22:58","15.07.2016 22:58","06.10.2019 23:05","19.03.2019 07:52","06.10.2019 21:50","06.10.2019 23:11","07.02.2019 17:51","06.10.2019 22:16","06.10.2019 21:50","07.10.2019 15:32","05.04.2019 18:42","06.10.2019 23:05","29.06.2018 21:48","06.10.2019 23:42","06.10.2019 22:16","06.10.2019 21:50"];
  document.getElementById("dates").innerHTML = dates.map(d => `<tr><td></td><td></td><td>&lt;Папка&gt;</td><td>${d}</td></tr>`).join("");
</script>
<script src="https://cdn.jsdelivr.net/npm/bootstrap@5.3.0/dist/js/bootstrap.bundle.min.js"></script>
</body>
</html>
